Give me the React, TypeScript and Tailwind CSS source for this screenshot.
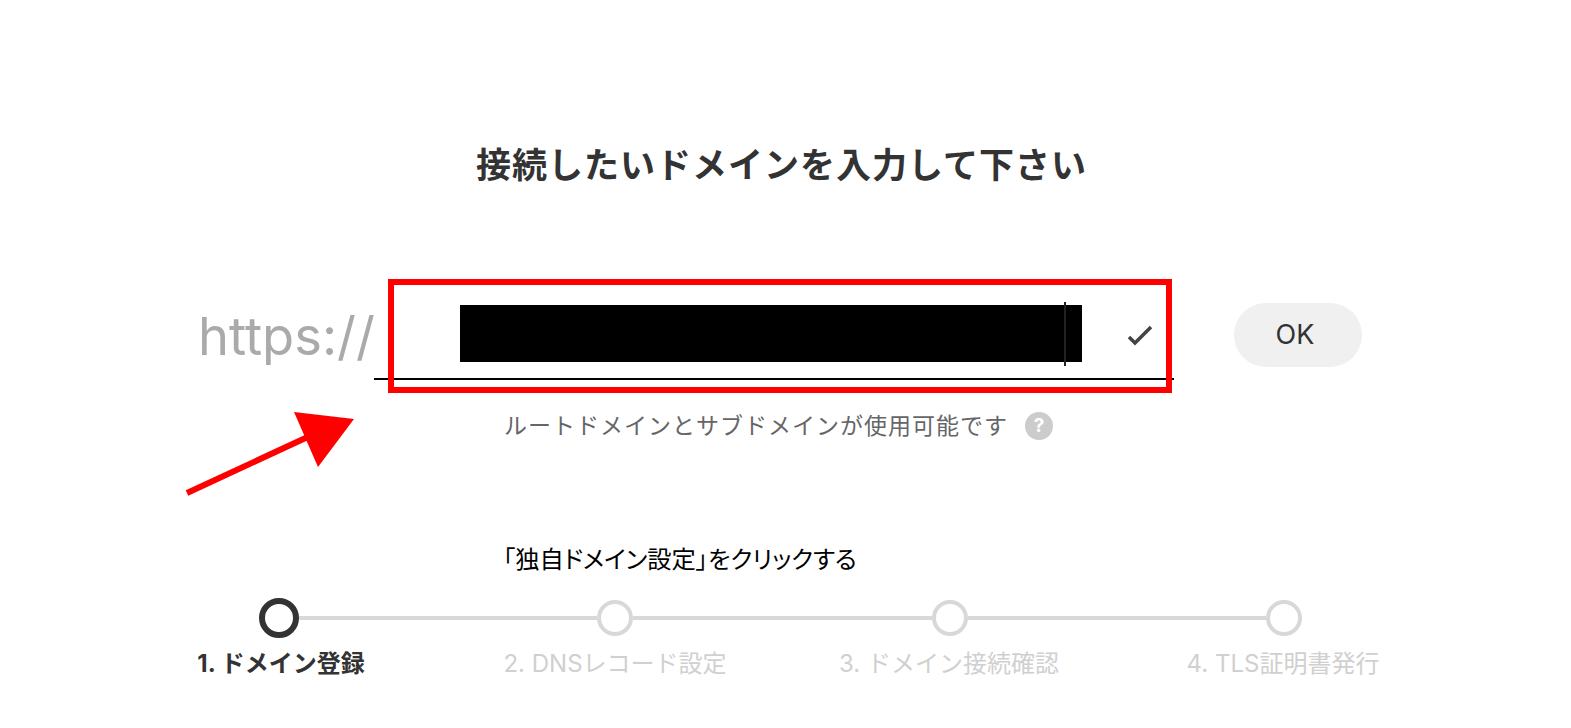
import React from 'react'

const steps = [
  { label: '1. ドメイン登録', active: true },
  { label: '2. DNSレコード設定', active: false },
  { label: '3. ドメイン接続確認', active: false },
  { label: '4. TLS証明書発行', active: false },
]

const App: React.FC = () => {
  return (
    <div className="relative h-[728px] w-[1571px] overflow-hidden bg-white font-['Inter','Noto_Sans_CJK_JP',sans-serif]">
      {/* Title */}
      <h1 className="pr-[8px] pt-[141px] text-center text-[35px] font-bold leading-[48px] tracking-[1px] text-[#333]">
        接続したいドメインを入力して下さい
      </h1>

      {/* Domain input */}
      <div className="mt-[111px] flex pl-[198px]">
        <span className="w-[176px] self-end pb-[12px] text-[52.5px] font-normal leading-[64px] text-[#aaa]">https://</span>
        <div className="relative h-[80px] w-[800px] border-b-2 border-black">
          {/* redacted value */}
          <div className="absolute left-[86px] top-[5px] h-[57px] w-[622px] bg-black" />
          <div className="absolute left-[690px] top-[2px] h-[64px] w-[2px] bg-[#222]" />
          <svg className="absolute left-[752px] top-[25px]" width="28" height="22" viewBox="0 0 28 22" fill="none">
            <path d="M3 12l6 6L25 2" stroke="#444" strokeWidth="3.5" />
          </svg>
          {/* red annotation box */}
          <div className="absolute left-[14px] top-[-21px] h-[114px] w-[784px] border-[6px] border-[#ff0000]" />
        </div>
        <button className="ml-[60px] mt-[3px] h-[64px] w-[128px] rounded-full bg-[#f0f0f0] pr-[6px] text-[27px] text-[#333]">OK</button>
      </div>

      {/* Hint */}
      <div className="mt-[30px] flex h-[32px] items-center pl-[504px]">
        <span className="text-[23px] leading-[32px] tracking-[1px] text-[#666]">ルートドメインとサブドメインが使用可能です</span>
        <span className="ml-[17px] flex h-[28px] w-[28px] items-center justify-center rounded-full bg-[#ccc] text-[19px] font-bold text-white">?</span>
      </div>

      {/* Annotation caption */}
      <p className="mt-[101px] pl-[503px] text-[24.3px] leading-[32px] text-black [font-feature-settings:'palt']">「独自ドメイン設定」をクリックする</p>

      {/* Stepper */}
      <div className="mt-[23px] flex w-[1043px] translate-x-[259px] items-center">
        {steps.map((step, index) => (
          <React.Fragment key={step.label}>
            {index > 0 && <div className="h-[4px] flex-1 bg-[#d8d8d8]" />}
            <div
              className={`shrink-0 rounded-full ${
                step.active ? 'h-[40px] w-[40px] border-[6px] border-[#333]' : 'h-[36px] w-[36px] border-[4px] border-[#d8d8d8]'
              }`}
            />
          </React.Fragment>
        ))}
      </div>
      <div className="mt-[8px] grid w-[1336px] translate-x-[114px] grid-cols-4 text-center text-[24px] leading-[36px]">
        {steps.map(step => (
          <span key={step.label} className={step.active ? 'font-bold text-[#333]' : 'text-[#d0d0d0]'}>
            {step.label}
          </span>
        ))}
      </div>

      {/* Red arrow */}
      <svg className="absolute left-0 top-0" width="400" height="520" fill="none">
        <path d="M187 493L312 435" stroke="#ff0000" strokeWidth="6" />
        <polygon points="294,412 354,419 318,467" fill="#ff0000" />
      </svg>
    </div>
  )
}

export default App
